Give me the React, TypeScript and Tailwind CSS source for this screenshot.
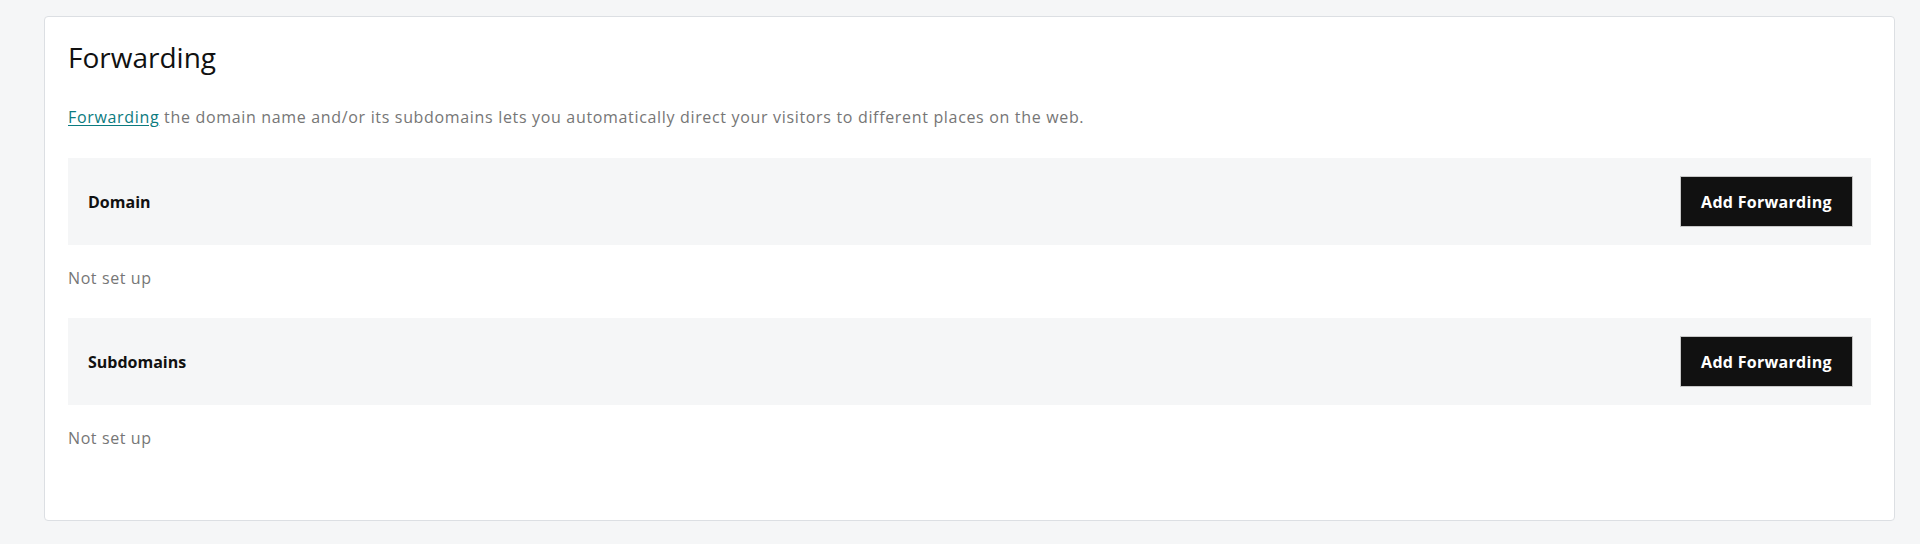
export default function App() {
  return (
    <div
      className="min-h-[544px] w-full bg-[#f5f6f7] pl-[44px] pr-[25px] pt-[16px] text-[#111]"
      style={{ fontFamily: '"Open Sans", "Liberation Sans", sans-serif' }}
    >
      <div className="rounded-[4px] border border-[#dcdfe3] bg-white px-[23px] pb-[70px] pt-[20px]">
        <h2 className="text-[28px] leading-[40px] font-normal">Forwarding</h2>
        <p className="mt-[28px] text-[16px] leading-[24px] tracking-[0.67px] text-[#767676]">
          <a href="#" className="text-[#0b7b80] underline underline-offset-2">
            Forwarding
          </a>{" "}
          the domain name and/or its subdomains lets you automatically direct your visitors to different places on the web.
        </p>
        <Section title="Domain" first />
        <Section title="Subdomains" />
      </div>
    </div>
  );
}

function Section({ title, first }: { title: string; first?: boolean }) {
  return (
    <div className={first ? "mt-[29px]" : "mt-[28px]"}>
      <div className="flex h-[87px] items-center justify-between bg-[#f5f6f7] pl-[20px] pr-[18px]">
        <span className="text-[16px] font-bold">{title}</span>
        <button className="h-[51px] w-[173px] border border-[#c8c8c8] bg-[#111] text-[16px] font-bold tracking-[0.3px] text-white">
          Add Forwarding
        </button>
      </div>
      <p className="mt-[21px] text-[16px] leading-[24px] tracking-[0.6px] text-[#767676]">Not set up</p>
    </div>
  );
}
